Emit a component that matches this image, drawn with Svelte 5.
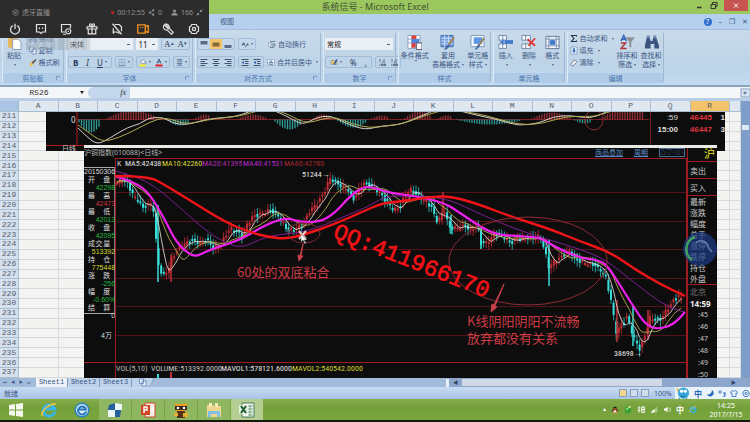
<script lang="ts">
  type Point = [number, number];

  const icons: Record<string, string> = {
    power: '<path d="M5 3.5a6 6 0 1 0 6 0M8 1v7" fill="none" stroke="currentColor" stroke-width="1.7"/>',
    chat: '<path d="M2 2h12v10h-4l-2 2-2-2H2z" fill="none" stroke="currentColor" stroke-width="1.6"/><path d="M5 7h1.6M9.4 7H11" stroke="currentColor" stroke-width="1.8"/>',
    screen: '<path d="M7 12H2V2h12v5M4 15h4" fill="none" stroke="currentColor" stroke-width="1.6"/><circle cx="11" cy="11" r="3.4" fill="none" stroke="currentColor" stroke-width="1.5"/><circle cx="11" cy="11" r="1"/>',
    gift: '<path d="M1.5 5h13v3h-13zM3 8h10v6.500H3zM8 5v9M8 5C4 5 4 1 6 1s2 4 2 4 0-4 2-4 2 4-2 4" fill="none" stroke="currentColor" stroke-width="1.6"/>',
    mute: '<path d="M2 1l12 14M5 2h6l3 3v6M11 14l-3-2H4l-1 2V7" fill="none" stroke="currentColor" stroke-width="1.6"/>',
    camera: '<path d="M1 2.500h10v11H1zM11 5.500l3-2h1v9h-1l-3-2" fill="none" stroke="currentColor" stroke-width="1.8"/><path d="M4 6h1.500M7 6h1.500" stroke="currentColor" stroke-width="1.500"/>',
    wrench: '<path d="M8 7.500l-5-5a4.300 4.300 0 0 0 4 7l5.500 5.500 2.500-2.500-5.500-5.500a4.300 4.300 0 0 0-5-5.500l3.500 3.500z" fill="none" stroke="currentColor" stroke-width="1.500"/>',
    gear: '<path d="M5 2h6l1 2 2 1v6l-2 1-1 2H5l-1-2-2-1V5l2-1z" fill="none" stroke="currentColor" stroke-width="1.6"/><circle cx="8" cy="8" r="2.200" fill="none" stroke="currentColor" stroke-width="1.6"/>',
    share: '<path d="M4 8l8-5M4 8l8 5" stroke="currentColor" stroke-width="1.4"/><circle cx="4" cy="8" r="2.500"/><circle cx="12" cy="3" r="2.500"/><circle cx="12" cy="13" r="2.500"/>',
    person: '<circle cx="8" cy="4.500" r="3.500"/><path d="M1 15v-3l4-3h6l4 3v3z"/>',
    shrink: '<path d="M15 1l-5 5M10 2v4h4M1 15l5-5M2 10h4v4" fill="none" stroke="currentColor" stroke-width="2"/>',
    logo: '<circle cx="8" cy="8" r="6.500" fill="none" stroke="currentColor" stroke-width="1.500"/><path d="M4 5l3 1v5M12 5L9 6v5M5 9h6" fill="none" stroke="currentColor" stroke-width="1.300"/>',
    paste: '<path d="M1 2h10v12H1z" fill="#e8b860"/><path d="M4 1h4v3H4z" fill="#8a8a94"/><path d="M6 5h6l3 3v8H6z" fill="#fff" stroke="#8a9bb8"/>',
    cut: '<path d="M4 1l6 9M12 1L6 10" stroke="#556a90" stroke-width="1.500"/><circle cx="4" cy="12" r="2.500" fill="none" stroke="#3a68b8" stroke-width="1.500"/><circle cx="12" cy="12" r="2.500" fill="none" stroke="#3a68b8" stroke-width="1.500"/>',
    copy: '<path d="M1 1h8v9H1zM6 5h8v10H6z" fill="#eef4fc" stroke="#4a6ca8" stroke-width="1.300"/>',
    brush: '<path d="M1 14l3-7 5 4-5 4z" fill="#ecc440"/><path d="M5 8l8-7 2 2-7 8z" fill="#6a5840"/>',
    top: '<path d="M1 1h14v7H1z" fill="#5b6b86"/>',
    middle: '<path d="M1 4h14v8H1z" fill="#8a6a38"/>',
    bottom: '<path d="M1 9h14v6H1z" fill="#5b6b86"/>',
    orient: '<path d="M2 10l3-6 3 6M3 8h4M8 14l6-7M14 7l-3 0M14 7v3" fill="none" stroke="#344a70" stroke-width="1.600"/>',
    left: '<path d="M1 2h14M1 6h9M1 10h14M1 14h9" stroke="#44546e" stroke-width="2"/>',
    center: '<path d="M1 2h14M4 6h8M1 10h14M4 14h8" stroke="#44546e" stroke-width="2"/>',
    right: '<path d="M1 2h14M6 6h9M1 10h14M6 14h9" stroke="#44546e" stroke-width="2"/>',
    outdent: '<path d="M1 2h14M8 6h7M8 10h7M1 14h14" stroke="#44546e" stroke-width="2"/><path d="M6 5v6L1 8z" fill="#3060b0"/>',
    wrap: '<path d="M4 2h11M4 7h10v4H8M4 14h8" fill="none" stroke="#5a6c88" stroke-width="1.600"/><path d="M1 4h5v8H1z" fill="#d8e4f4" stroke="#8492ac"/>',
    merge: '<path d="M1 2h14v12H1z" fill="#eaf1fa" stroke="#7688a8"/><path d="M3 8h4M13 8H9M8 4l-3 8h6z" stroke="#3a5a98" stroke-width="1.300" fill="none"/>',
    border: '<path d="M2 2h12v12H2zM8 2v12M2 8h12" fill="none" stroke="#8aa0c4" stroke-width="1.300"/><path d="M1 14.500h14" stroke="#456"/>',
    fill: '<path d="M3 7l5-5 5 5-5 4z" fill="#f6f6f6" stroke="#44546e"/><path d="M13 7l2 3-2 1z" fill="#3060b0"/><path d="M1 12h13v4H1z" fill="#f4ec20"/>',
    color: '<path d="M4 10l4-9 4 9M5.500 7h5" fill="none" stroke="#34507e" stroke-width="1.800"/><path d="M1 12h14v4H1z" fill="#e02020"/>',
    money: '<path d="M2 4h12v8H2z" fill="#e6c85c" stroke="#6a84b0"/><path d="M8 12l6-10" stroke="#3858a0" stroke-width="3"/>',
    decimal: '<path d="M2 3h4M10 3h4M3 7h2M8 7h6M2 13h3M7 11h3v3H7zM12 11h3v3h-3z" stroke="#44546e" stroke-width="1.600" fill="none"/>',
    cond: '<path d="M1 1h13v14H1z" fill="#fff" stroke="#8aa0c4"/><path d="M1 5h13M1 9h13M5 1v14M9 1v14" stroke="#8aa0c4"/><path d="M5 1h5v4H5zM5 9h4v5H5z" fill="#e04040"/><path d="M5 5h8v4H5z" fill="#4a84d8"/><path d="M10 9h6v7h-6z" fill="#f8f8f8" stroke="#556"/>',
    table: '<path d="M1 1h13v12H1z" fill="#6a9be0" stroke="#4468a8"/><path d="M1 4h13M1 7h13M1 10h13M5 1v12M9 1v12" stroke="#cfe0f6"/><path d="M15 3l-6 8" stroke="#a08050" stroke-width="2"/><path d="M9 10l2 2-4 4H4z" fill="#476ca8"/>',
    cell: '<path d="M1 1h14v12H1z" fill="#f2f6fc" stroke="#7f96bc"/><path d="M4 3h9v7H4z" fill="#5f96e4"/><path d="M15 4l-6 8" stroke="#a08050" stroke-width="2"/><path d="M9 10l2 2-4 4H5z" fill="#476ca8"/>',
    insert: '<path d="M1 1h8v5H1zM1 10h8v5H1zM5 1v5M5 10v5" fill="#f4f8fc" stroke="#7488a8"/><path d="M7 6h9v4H7z" fill="#3f79cc"/><path d="M6 5v6L2 8z" fill="#3f79cc"/>',
    remove: '<path d="M1 1h9v5H1zM1 10h9v5H1zM5 1v5M5 10v5" fill="#f4f8fc" stroke="#7488a8"/><path d="M7 5l8 7M15 4l-7 8" stroke="#e43838" stroke-width="2"/>',
    format: '<path d="M1 2h14v13H1z" fill="#f4f8fc" stroke="#5e7498"/><path d="M1 5h14M1 12h14M4 2v13M12 2v13" stroke="#7f92b0"/><path d="M5 6h6v5H5z" fill="#3f79cc"/>',
    sum: '<path d="M13 4V2H3l5 6-5 6h10v-2" fill="none" stroke="#1c2e50" stroke-width="2.200"/>',
    down: '<path d="M2 1h12v14H2z" fill="#eef4fc" stroke="#4a6ca8"/><path d="M8 3v6" stroke="#2d65c0" stroke-width="3"/><path d="M4 8h8l-4 5z" fill="#2d65c0"/>',
    erase: '<path d="M1 12l8-9 5 3-8 9z" fill="#f6f6f6" stroke="#50607c" stroke-width="1.400"/>',
    sort: '<path d="M1 7l3-6 3 6M2 5h4" fill="none" stroke="#2f62b8" stroke-width="1.500"/><path d="M1 9h5l-5 6h6" fill="none" stroke="#b03838" stroke-width="1.600"/><path d="M6 3h10l-4 5v6l-2-1V8z" fill="#8e8f96"/>',
    find: '<path d="M3 3h3l1 4h2l1-4h3l3 9v3h-5v-5H7v5H1v-3z" fill="#3c557e"/><path d="M3 1h3v3H3zM10 1h3v3h-3z" fill="#6f88b0"/>',
    windows: '<path d="M1 3l6-1v5.500H1zM8 2l7-1v6.500H8zM1 8.500h6V14l-6-1zM8 8.500h7V15l-7-1z" fill="#f4f8ec"/>',
    ie: '<path d="M14 10a6 5.500 0 1 1 0-3H4" fill="none" stroke="#39b4e8" stroke-width="2.800"/><path d="M1 14C0 9 8 1 15 2" fill="none" stroke="#ecc840" stroke-width="1.500"/>',
    browser: '<circle cx="8" cy="8" r="7.500" fill="#2b83c4"/><circle cx="8" cy="8" r="6" fill="#d8ecf6"/><path d="M12 9.500a4 4 0 1 1 0-2H5" fill="none" stroke="#2477b8" stroke-width="2"/>',
    flag: '<path d="M2 3l6-2v7H1zM8 8h6l-1 7H8z" fill="#215f9e"/><path d="M8 1l7 1v6H8zM1 8h7v7H1z" fill="#eef5f8"/>',
    ppt: '<path d="M5 1h10v14H5z" fill="#f8ece6" stroke="#c84830"/><path d="M1 3h9v10H1z" fill="#cf4527"/><path d="M4 11V5h3v3H4M11 6h3M11 9h3" fill="none" stroke="#fff" stroke-width="1.400"/>',
    bear: '<path d="M2 1l3 1h6l3-1v8H2z" fill="#e89c20"/><path d="M2 4h12v4H2z" fill="#38261c"/><circle cx="5" cy="6" r="1.300" fill="#fff"/><circle cx="11" cy="6" r="1.300" fill="#fff"/><path d="M4 9h8v7H4z" fill="#54301c"/><path d="M1 11h4v3H1zM10 11h5v4h-5z" fill="#e8b030"/>',
    folder: '<path d="M1 3h6l1 1h7v11H1z" fill="#eed78c"/><path d="M3 1h3v4H3zM9 1h3v4H9z" fill="#f6eab8"/><path d="M2 9h12v6h-3v-3H5v3H2z" fill="#7fc0e4"/>',
    excel: '<path d="M3 1h12v14H3z" fill="#f5f8f2" stroke="#4c7c58"/><path d="M9 4h5M9 7h5M9 10h5M9 13h5M11 3v11" stroke="#71a27c"/><path d="M0 3h9v9H0z" fill="#e4efe0"/><path d="M2 4l5 7M7 4l-5 7" stroke="#1c5c35" stroke-width="2"/>',
    penguin: '<path d="M4 7a4 5 0 0 1 8 0l3 5-3-1v3H4v-3l-3 1z" fill="#1c1c1c"/><path d="M5 9h6v5H5z" fill="#fff"/><path d="M3 8h10v2H3z" fill="#e42c20"/><path d="M5 6h6v1.500H5zM3 14h4v2H3zM9 14h4v2H9z" fill="#eda028"/>',
    ball: '<circle cx="8" cy="9" r="6.500" fill="#36a336"/><path d="M8 5c1-4 4-4 6-4 0 3-2 5-6 4z" fill="#d6ee8c"/><circle cx="6" cy="7" r="2" fill="#a6e48c"/>',
    usb: '<path d="M4 1v14M1 5h6M1 10h6M9 3h6v11H9zM9 8h6M12 1v13" fill="none" stroke="#fff" stroke-width="1.500"/>',
    signal: '<path d="M1 14L15 2v12z" fill="#a9c57e"/><path d="M1 14l8-7v7z" fill="#fff"/>',
    speaker: '<path d="M2 6h3l4-4v12L5 10H2z" fill="#fff"/><path d="M11 5c2 2 2 4 0 6M13 3c3 3 3 7 0 10" fill="none" stroke="#fff"/>',
    mascot: '<path d="M1 2l3 7 3-3z" fill="#d8b830"/><circle cx="9" cy="8" r="6" fill="#38a6d8"/><circle cx="7" cy="6" r="1.800" fill="#fff"/><circle cx="11" cy="6" r="1.800" fill="#fff"/><path d="M6 11q3 2 5 0M5 13l-2 3M12 13l2 3" fill="none" stroke="#155f92"/>',
    moon: '<path d="M12 1a7 7 0 1 1-10 9c6 1 10-3 10-9z" fill="#2468b8"/>',
    comma: '<circle cx="4" cy="5" r="2.500" fill="none" stroke="#2468b8" stroke-width="1.600"/><path d="M10 7h4v4l-3 4" fill="none" stroke="#2468b8" stroke-width="2.400"/>',
    shirt: '<path d="M5 2l3 2 3-2 4 3-2 4-1-1v6H4V8L3 9 1 5z" fill="none" stroke="#2468b8" stroke-width="1.600"/>',
  };

  const liveTools = ['power', 'chat', 'screen', 'gift', 'mute', 'camera', 'wrench', 'gear'];
  const columns = 'ABCDEFGHIJKLMNOPQR'.split('');
  const rows = Array.from({ length: 27 }, (_, i) => 211 + i);

  const quotes = [
    ['开盘', '42298', 'green'],
    ['最高', '42473', 'red'],
    ['最低', '42013', 'green'],
    ['收盘', '42095', 'green'],
    ['成交量', '513392', 'yellow'],
    ['持仓', '775448', 'yellow'],
    ['涨跌', '-256', 'green'],
    ['幅度', '-0.60%', 'green'],
    ['结算', '0', 'white'],
  ];
  const sideLabels = ['最新', '涨跌', '幅度', '总手', '涨停', '跌停', '持仓', '外盘'];
  const seconds = [':45', ':46', ':47', ':48', ':49', ':50'];

  const bigStyles = [
    ['cond', '条件格式', ''],
    ['table', '套用', '表格格式'],
    ['cell', '单元格', '样式'],
  ];
  const cellTools = [
    ['insert', '插入'],
    ['remove', '删除'],
    ['format', '格式'],
  ];
  const editTools = [
    ['sum', '自动求和'],
    ['down', '填充'],
    ['erase', '清除'],
  ];
  const apps = ['windows', 'ie', 'browser', 'flag', 'ppt', 'bear', 'folder', 'excel'];
  const tray = ['penguin', 'ball', 'usb', 'signal', 'speaker'];

  // price track, x along the time axis and y down the pane
  const track: Point[] = [
    [115, 184], [122, 179], [128, 184], [133, 195], [138, 200], [143, 208], [147, 205], [151, 203], [154, 212],
    [157, 255], [160, 272], [164, 274], [168, 270], [172, 258], [176, 252], [182, 245], [192, 240], [200, 243],
    [206, 240], [213, 247], [220, 246], [226, 235], [230, 228], [236, 230], [242, 238], [247, 225], [252, 217],
    [258, 215], [265, 212], [270, 210], [278, 215], [284, 224], [288, 232], [295, 228], [303, 225], [310, 210],
    [318, 203], [325, 190], [330, 178], [335, 182], [342, 187], [347, 188], [353, 200], [358, 192], [363, 182],
    [370, 186], [378, 190], [385, 200], [394, 210], [400, 207], [405, 195], [410, 189], [418, 196], [425, 200],
    [432, 208], [436, 221], [440, 218], [444, 208], [449, 228], [455, 228], [465, 226], [470, 230], [477, 225],
    [481, 243], [486, 243], [495, 234], [505, 237], [511, 243], [518, 238], [530, 238], [540, 236], [545, 252],
    [549, 268], [553, 262], [560, 258], [570, 250], [575, 260], [583, 262], [597, 266], [605, 275], [611, 300],
    [616, 332], [621, 325], [627, 317], [633, 335], [640, 350], [645, 335], [650, 318], [660, 320], [668, 308],
    [678, 295], [684, 302],
  ];

  function priceAt(x: number) {
    const i = Math.max(1, track.findIndex((p) => p[0] >= x));
    const [x0, y0] = track[i - 1];
    const [x1, y1] = track[i];
    return y0 + ((y1 - y0) * (x - x0)) / (x1 - x0);
  }

  const candles = Array.from({ length: 218 }, (_, i) => {
    const x = 117 + i * 2.6;
    const open = priceAt(x - 2) + Math.sin(i * 7.3) * 2;
    const close = priceAt(x) + Math.sin(i * 4.1) * 2;
    return {
      x,
      close,
      fall: close > open,
      top: Math.min(open, close),
      size: Math.max(2, Math.abs(close - open)),
      high: Math.min(open, close) - 2 - Math.abs(Math.sin(i * 3.7)) * 4,
      low: Math.max(open, close) + 2 + Math.abs(Math.sin(i * 5.9)) * 4,
    };
  });

  // long shadows that the track leaves out
  const shadows = [
    [158, 205, 282, 1], [171, 255, 282, 0], [443, 192, 212, 0], [549, 240, 286, 1],
    [481, 228, 249, 1], [451, 215, 234, 1], [617, 300, 342, 0], [633, 305, 346, 1], [648, 310, 340, 0],
  ];

  function average(n: number) {
    return candles
      .map((c, i) => {
        const part = candles.slice(Math.max(0, i - n + 1), i + 1);
        return `${c.x.toFixed(1)},${(part.reduce((s, p) => s + p.close, 0) / part.length).toFixed(1)}`;
      })
      .join(' ');
  }

  function curve(points: Point[]) {
    let d = `M${points[0]}`;
    for (let i = 1; i < points.length - 1; i++) {
      const [x, y] = points[i];
      const [nx, ny] = points[i + 1];
      d += `Q${x},${y} ${(x + nx) / 2},${(y + ny) / 2}`;
    }
    return d + `L${points[points.length - 1]}`;
  }

  const ma20 = curve([
    [115, 171], [135, 176], [155, 186], [178, 206], [205, 230], [225, 243], [242, 248], [260, 239], [280, 234],
    [300, 233], [325, 225], [345, 216], [370, 206], [385, 196], [410, 196], [445, 198], [470, 209], [500, 223],
    [530, 234], [560, 243], [600, 256], [625, 275], [650, 295], [668, 307], [684, 312],
  ]);
  const ma40 = curve([
    [115, 176], [135, 182], [150, 194], [165, 220], [175, 240], [185, 251], [195, 257], [205, 252], [218, 247],
    [240, 240], [260, 228], [275, 221], [288, 218], [300, 222], [320, 222], [335, 213], [350, 196], [363, 187],
    [372, 187], [390, 193], [415, 196], [445, 203], [460, 213], [490, 233], [510, 236], [540, 237], [555, 247],
    [580, 258], [598, 260], [607, 265], [620, 285], [640, 317], [648, 326], [657, 329], [670, 326], [678, 320],
    [685, 312],
  ]);
  const ma60 = curve([
    [115, 176], [148, 176], [165, 185], [191, 201], [225, 222], [249, 232], [268, 237], [287, 239], [306, 234],
    [335, 224], [364, 211], [383, 203], [397, 202], [430, 197], [450, 196], [478, 204], [512, 217], [550, 229],
    [579, 241], [610, 252], [636, 270], [660, 284], [685, 296],
  ]);

  const macdFast = curve([
    [78, 128], [85, 135], [97, 145], [110, 138], [128, 127], [140, 124], [148, 118], [163, 117], [172, 123],
    [186, 125], [200, 121], [215, 118], [235, 117], [248, 112], [262, 108], [276, 111], [290, 118], [303, 125],
    [315, 118], [330, 115], [345, 123], [365, 130], [380, 126], [398, 125], [412, 120], [430, 112], [445, 107],
    [460, 111], [480, 116], [500, 120], [518, 126], [540, 123], [552, 117], [570, 115], [590, 119], [606, 112],
  ]);
  const macdSlow = curve([
    [78, 125], [88, 132], [102, 142], [118, 138], [135, 130], [150, 122], [165, 117], [178, 122], [190, 124],
    [206, 120], [222, 118], [240, 116], [254, 112], [266, 109], [284, 112], [298, 120], [309, 123], [322, 119],
    [336, 117], [352, 124], [370, 128], [386, 126], [402, 124], [418, 118], [436, 112], [450, 109], [468, 112],
    [488, 116], [508, 122], [526, 125], [544, 123], [560, 118], [576, 116], [594, 117], [612, 111],
  ]);

  const waves = [
    [79, 102, 13], [106, 160, -9], [168, 192, 6], [196, 213, -5], [238, 268, -5], [275, 304, 10], [314, 332, -5],
    [338, 368, 8], [372, 391, -4], [405, 434, -8], [438, 455, -4], [457, 524, 5], [532, 572, -7], [575, 594, 4],
    [600, 662, -12],
  ];
  const bars = waves.flatMap(([from, to, peak]) =>
    Array.from({ length: Math.floor((to - from) / 2.5) }, (_, i) => {
      const x = from + i * 2.5;
      return { x, h: peak * Math.sin((Math.PI * (x - from + 2)) / (to - from + 4)) };
    }).filter((b) => b.x < 645),
  );
</script>

{#snippet icon(name: string, size = '')}
  <svg class="icon {size}" viewBox="0 0 16 16" fill="currentColor" aria-hidden="true">{@html icons[name]}</svg>
{/snippet}

<div class="app">
  <header class="title-bar">
    <h1>系统信号 - Microsoft Excel</h1>
    <div class="window-buttons">
      <button aria-label="最小化">
        <svg class="icon" viewBox="0 0 16 16"><path d="M2 12h9" stroke="#333" stroke-width="3" /></svg>
      </button>
      <button aria-label="还原">
        <svg class="icon" viewBox="0 0 16 16"><path d="M2 6h9v8H2zM5 6V2h9v8h-3" fill="none" stroke="#333" stroke-width="2" /></svg>
      </button>
      <button class="close" aria-label="关闭">
        <svg class="icon" viewBox="0 0 16 16"><path d="M4 4l8 8M12 4l-8 8" stroke="#fff" stroke-width="2" /></svg>
      </button>
    </div>
  </header>

  <nav class="menu">
    <button>视图</button>
    <div class="doc-buttons">
      <button class="help" aria-label="帮助">?</button>
      <button aria-label="最小化窗口">–</button>
      <button aria-label="还原窗口">❐</button>
      <button aria-label="关闭窗口">✕</button>
    </div>
  </nav>

  <section class="ribbon">
    <div class="group">
      <div class="body">
        <button class="big">{@render icon('paste', 'large')}<span>粘贴</span><i></i></button>
        <div class="stack">
          <button>{@render icon('cut')}剪切</button>
          <button>{@render icon('copy')}复制</button>
          <button>{@render icon('brush')}格式刷</button>
        </div>
      </div>
      <footer>剪贴板<b></b></footer>
    </div>
    <div class="group">
      <div class="body lines">
        <div class="line">
          <select class="wide" aria-label="字体"><option>宋体</option></select>
          <select class="narrow" aria-label="字号"><option>11</option></select>
          <span class="tools font-size"><button>A<sup>▴</sup></button><button>A<sup>▾</sup></button></span>
        </div>
        <div class="line spread">
          <span class="tools letters">
            <button><strong>B</strong></button><button><em>I</em></button><button><u>U</u><i></i></button>
          </span>
          <span class="tools"><button aria-label="边框">{@render icon('border')}<i></i></button></span>
          <span class="tools">
            <button aria-label="填充颜色">{@render icon('fill')}<i></i></button>
            <button aria-label="字体颜色">{@render icon('color')}<i></i></button>
          </span>
          <span class="tools"><button>变<i></i></button></span>
        </div>
      </div>
      <footer>字体<b></b></footer>
    </div>
    <div class="group">
      <div class="body lines">
        <div class="line">
          <span class="tools">
            <button aria-label="顶端对齐">{@render icon('top')}</button>
            <button class="on" aria-label="垂直居中">{@render icon('middle')}</button>
            <button aria-label="底端对齐">{@render icon('bottom')}</button>
          </span>
          <span class="tools"><button aria-label="方向">{@render icon('orient')}<i></i></button></span>
          <button class="end">{@render icon('wrap')}自动换行</button>
        </div>
        <div class="line">
          <span class="tools">
            {#each ['left', 'center', 'right'] as name}
              <button aria-label={name}>{@render icon(name)}</button>
            {/each}
          </span>
          <span class="tools">
            <button aria-label="减少缩进量">{@render icon('outdent')}</button>
            <button aria-label="增加缩进量">{@render icon('outdent')}</button>
          </span>
          <button>{@render icon('merge')}合并后居中<i></i></button>
        </div>
      </div>
      <footer>对齐方式<b></b></footer>
    </div>
    <div class="group">
      <div class="body lines">
        <div class="line">
          <select class="full" aria-label="数字格式"><option>常规</option></select>
        </div>
        <div class="line spread">
          <span class="tools letters">
            <button aria-label="会计数字格式">{@render icon('money')}<i></i></button>
            <button>%</button><button>,</button>
          </span>
          <span class="tools">
            <button aria-label="增加小数位数">{@render icon('decimal')}</button>
            <button aria-label="减少小数位数">{@render icon('decimal')}</button>
          </span>
        </div>
      </div>
      <footer>数字<b></b></footer>
    </div>
    <div class="group">
      <div class="body">
        {#each bigStyles as [name, first, second]}
          <button class="big">
            {@render icon(name, 'large')}<span>{first}</span>
            <span class="second">{second}<i></i></span>
          </button>
        {/each}
      </div>
      <footer>样式</footer>
    </div>
    <div class="group">
      <div class="body">
        {#each cellTools as [name, label]}
          <button class="big">{@render icon(name, 'large')}<span>{label}</span><i></i></button>
        {/each}
      </div>
      <footer>单元格</footer>
    </div>
    <div class="group">
      <div class="body">
        <div class="stack">
          {#each editTools as [name, label]}
            <button>{@render icon(name)}{label}<i></i></button>
          {/each}
        </div>
        <button class="big">{@render icon('sort', 'large')}<span>排序和</span><span class="second">筛选<i></i></span></button>
        <button class="big">{@render icon('find', 'large')}<span>查找和</span><span class="second">选择<i></i></span></button>
      </div>
      <footer>编辑</footer>
    </div>
  </section>

  <div class="formula-bar">
    <input class="name-box" aria-label="名称框" value="R526" />
    <i></i>
    <button class="fx"><em>fx</em></button>
    <input class="formula" aria-label="编辑栏" value="" />
    <button class="expand" aria-label="展开编辑栏">»</button>
  </div>

  <main class="sheet">
    <table>
      <thead>
        <tr>
          <th class="corner"></th>
          {#each columns as name}
            <th class:current={name === 'R'}>{name}</th>
          {/each}
          <th class="rest"></th>
        </tr>
      </thead>
      <tbody>
        {#each rows as n}
          <tr>
            <th>{n}</th>
            {#each columns as name (name)}
              <td></td>
            {/each}
            <td></td>
          </tr>
        {/each}
      </tbody>
    </table>
    <div class="v-scroll"><span></span></div>

    <div class="picture macd">
      <svg viewBox="46 112 604 39" preserveAspectRatio="xMinYMin slice">
        <path d="M77 119.500H649" stroke="#7c2026" />
        {#each bars as bar}
          <path d="M{bar.x} 119.500v{bar.h}" stroke={bar.h > 0 ? '#2f9c98' : '#98323a'} stroke-width="1.300" />
        {/each}
        <path d="M77 112V145M46 145.500H84" stroke="#b01c20" />
        <path d={macdFast} fill="none" stroke="#d4d0c8" />
        <path d={macdSlow} fill="none" stroke="#b0aa50" />
        <ellipse cx="594" cy="120" rx="9" ry="10" fill="none" stroke="#8c2c30" />
        <text x="71" y="123" font-size="8" fill="#ddd">0</text>
        <text x="62" y="151" font-size="7" fill="#ccc">日线</text>
      </svg>
      <div class="ticks">
        <span>:59</span><b>46445</b><strong>1</strong>
        <strong>15:00</strong><b>46447</b><strong>3</strong>
      </div>
    </div>

    <div class="picture kline">
      <div class="chart">
        <div class="chart-head">
          <span>沪铜指数(010088)&lt;日线&gt;</span>
          <a href="#overlay">商品叠加</a>
          <a href="#period">周期</a>
          <a class="boxed" href="#zoom">△▽◁▷</a>
        </div>
        <div class="chart-body">
          <div class="side-left">
            <dl>
              <dt class="date">20150306</dt>
              {#each quotes as [label, value, tone]}
                <dt>{#each label as char}<span>{char}</span>{/each}</dt>
                <dd class={tone}>{value}</dd>
              {/each}
            </dl>
            <p>4万</p>
            <div class="left-foot"></div>
          </div>
          <svg class="plot" viewBox="115 158 572 220" preserveAspectRatio="xMinYMin slice">
            {#each [192.5, 221.5, 249.5, 278.5, 306.5, 335.5] as y}
              <path d="M115 {y}H687" stroke="#541419" />
            {/each}
            <path d="M115 158.500H687M115 362.500H687" stroke="#a01c22" />
            <path d="M115.500 158V378M686.500 158V378" stroke="#a01c22" />

            {#each candles as c}
              <path d="M{c.x} {c.high}V{c.low}" stroke={c.fall ? '#30c8c4' : '#c03038'} stroke-width="0.8" />
              <path d="M{c.x} {c.top}v{c.size}" stroke={c.fall ? '#38e0dc' : '#c42c34'} stroke-width="2" />
            {/each}
            {#each shadows as [x, from, to, fall]}
              <path d="M{x} {from}V{to}" stroke={fall ? '#38dcd8' : '#c03038'} stroke-width="1.500" />
            {/each}
            <path d="M158 374v4" stroke="#38dcd8" stroke-width="2" />
            <path d="M171 372v6" stroke="#c03038" stroke-width="2" />

            <polyline points={average(5)} fill="none" stroke="#d8d4cc" stroke-width="0.9" />
            <polyline points={average(11)} fill="none" stroke="#b8ac50" stroke-width="0.9" />
            <path d={ma20} fill="none" stroke="#7c1f90" />
            <path d={ma40} fill="none" stroke="#f020ee" stroke-width="2.200" />
            <path d={ma60} fill="none" stroke="#f41418" stroke-width="2.400" />

            <ellipse cx="304" cy="233" rx="16" ry="10" fill="none" stroke="#7c2830" />
            <ellipse cx="528" cy="261" rx="79" ry="44" fill="none" stroke="#8c2c34" />
            <g fill="#c8404a" stroke="#c8404a">
              <path d="M303 244l-3 12-2-1 1 6 4-5-2 0z" />
              <path d="M504 284l-10 21-2-1-1 8 6-5-2-1z" />
            </g>
            <path d="M299 231l7 8M306 231l-7 8" stroke="#e8c8c4" stroke-width="2" />
            <path d="M301 234v8l2-2 2 4 1-1-2-3h3z" fill="#fff" stroke="#555" stroke-width="0.5" />

            <g class="legend">
              <text x="117" y="166" fill="#d8d8d8">K</text>
              <text x="125" y="166" fill="#e4e4e4">MA5:42438</text>
              <text x="162" y="166" fill="#dada30">MA10:42260</text>
              <text x="202" y="166" fill="#b428b4">MA20:41395</text>
              <text x="243" y="166" fill="#b428c8">MA40:41531</text>
              <text x="284" y="166" fill="#a4282c">MA60:42780</text>
              <text x="302" y="177" fill="#e8e8e8">51244→</text>
              <text x="614" y="356" fill="#e8e8e8">38698→</text>
              <text x="116" y="371" fill="#b8b8b8">VOL(5,10)</text>
              <text x="151" y="371" fill="#c4c4c4">VOLUME:513392.0000</text>
              <text x="221" y="371" fill="#e4e4e4">MAVOL1:578121.6000</text>
              <text x="292" y="371" fill="#d4d430">MAVOL2:540542.0000</text>
            </g>
            <g class="note">
              <text x="237" y="277">60处的双底粘合</text>
              <text x="467" y="326">K线阴阳阴阳不流畅</text>
              <text x="467" y="343">放弃都没有关系</text>
            </g>
            <text class="contact" transform="translate(332 237) rotate(21.500)">QQ:411966170</text>
          </svg>
        </div>
      </div>
      <aside>
        <h2>沪</h2>
        <p class="deal">卖出</p>
        <p class="deal">买入</p>
        <ul>
          {#each sideLabels as label}
            <li>{label}</li>
          {/each}
        </ul>
        <p class="city">北京</p>
        <p class="time">14:59</p>
        <ol>
          {#each seconds as s}
            <li>{s}</li>
          {/each}
        </ol>
        <svg class="gauge" viewBox="0 0 36 36" aria-hidden="true">
          <circle cx="18" cy="18" r="17" fill="#1c3c88" fill-opacity="0.7" />
          <path d="M10 29A13 13 0 0 1 13 6" fill="none" stroke="#3fa060" stroke-width="2.500" />
          <path d="M14 12a7 7 0 0 1 12 4M26 16l4 5" fill="none" stroke="#86a4d8" stroke-opacity="0.6" stroke-width="2" />
        </svg>
      </aside>
    </div>
  </main>

  <div class="sheet-tabs">
    <div class="arrows"><button aria-label="第一张">⏮</button><button aria-label="上一张">◀</button><button aria-label="下一张">▶</button><button aria-label="最后一张">⏭</button></div>
    <button class="tab active">Sheet1</button>
    <button class="tab">Sheet2</button>
    <button class="tab">Sheet3</button>
    <button class="tab add" aria-label="插入工作表">{@render icon('copy')}</button>
    <div class="h-scroll"><b></b><small>◀</small><span></span><small>▶</small></div>
  </div>

  <div class="status">
    <span>就绪</span>
    <div class="views"><button aria-label="普通"></button><button aria-label="页面布局"></button><button aria-label="分页预览"></button></div>
    <span class="zoom">100%</span>
    <div class="ime">
      {@render icon('mascot', 'large')}
      <b>中</b>
      {@render icon('moon')}{@render icon('comma')}{@render icon('shirt')}{@render icon('gear')}
    </div>
  </div>

  <footer class="taskbar">
    {#each apps as name, i}
      <button class:running={i > 2} class:front={name === 'excel'} aria-label={name}>{@render icon(name, 'app-icon')}</button>
    {/each}
    <div class="tray">
      <small>▴</small>
      {#each tray as name}
        {@render icon(name)}
      {/each}
      <b>中</b>
      {@render icon('ie')}
    </div>
    <time><span>14:25</span><span>2017/7/15</span></time>
  </footer>

  <div class="watermark"></div>
  <div class="live">
    <div class="live-info">
      {@render icon('logo')}<span class="name">虎牙直播</span>
      <i></i><span class="elapsed">00:12:55</span>
      {@render icon('share')}<span class="shares">0</span>
      {@render icon('person')}<span>166</span>
      {@render icon('shrink')}
    </div>
    <div class="live-tools">
      {#each liveTools as name}
        <button class:active={name === 'camera'} aria-label={name}>{@render icon(name)}</button>
      {/each}
    </div>
  </div>
</div>

<style>
  :global(body) {
    margin: 0;
  }

  .app {
    position: relative;
    display: flex;
    flex-direction: column;
    min-height: 100vh;
    overflow: hidden;
    background: #b8d0ec;
    color: #3d5785;
    font: 7px/9px 'Noto Sans', 'Noto Sans CJK SC', sans-serif;
  }

  .app * {
    box-sizing: border-box;
  }

  button,
  input,
  select {
    margin: 0;
    padding: 0;
    border: 0;
    background: none;
    color: inherit;
    font: inherit;
  }

  button {
    display: flex;
    align-items: center;
    justify-content: center;
    gap: 2px;
    white-space: nowrap;
  }

  h1,
  h2,
  p,
  ul,
  ol,
  dl,
  dd {
    margin: 0;
    padding: 0;
    list-style: none;
    font-weight: 400;
  }

  .icon {
    flex: none;
    display: block;
    width: 8px;
    height: 9px;
  }

  .large {
    width: 15px;
    height: 16px;
  }

  .title-bar {
    display: flex;
    align-items: center;
    justify-content: center;
    height: 14px;
    background: #9cc75f;
    color: #3f5230;
  }

  h1 {
    font-size: 9px;
    line-height: 14px;
  }

  .window-buttons {
    position: absolute;
    top: 0;
    right: 2px;
    display: flex;
    height: 11px;
    gap: 6px;
  }

  .close {
    width: 24px;
    background: #c75450;
  }

  .menu {
    display: flex;
    justify-content: space-between;
    height: 15px;
    padding: 0 2px 0 220px;
    background: #b5d0ee;
  }

  .doc-buttons {
    display: flex;
    align-items: center;
    gap: 7px;
  }

  .help {
    width: 8px;
    height: 8px;
    border-radius: 50%;
    background: #2f6fd0;
    color: #fff;
  }

  .ribbon {
    display: grid;
    grid-template-columns: 62px 127px 126px 73px 93px 72px 97px;
    gap: 2px;
    height: 58px;
    padding: 2px;
    border-top: 1px solid #a5bfdd;
    border-bottom: 2px solid #88a5bd;
    background: linear-gradient(#c9dbea, #bdd3e7 60%, #c3daf0);
  }

  .group {
    display: flex;
    flex-direction: column;
    min-width: 0;
    border-right: 1px solid #9fb8d4;
    border-left: 1px solid #dce9f6;
    border-radius: 2px;
  }

  .group footer {
    position: relative;
    display: flex;
    align-items: center;
    justify-content: center;
    height: 10px;
    background: #b0cbe8;
    color: #4c74a8;
  }

  .group footer b {
    position: absolute;
    right: 3px;
    width: 4px;
    height: 4px;
    border: 1px solid #7f9cc4;
    border-right: 0;
    border-bottom: 0;
  }

  .body {
    flex: 1;
    display: flex;
    justify-content: space-around;
    min-height: 0;
  }

  .big {
    flex-direction: column;
    justify-content: flex-start;
    gap: 0;
    padding-top: 2px;
  }

  .big span {
    margin-top: 1px;
  }

  .big .second {
    display: flex;
    align-items: center;
    margin: 0;
  }

  .big > i {
    margin-top: 4px;
  }

  i {
    width: 0;
    height: 0;
    margin-left: 2px;
    border: 1px solid transparent;
    border-top: 2px solid #50607c;
    border-bottom: 0;
  }

  .stack {
    display: flex;
    flex-direction: column;
    align-items: flex-start;
    gap: 3px;
    padding-top: 2px;
  }

  .stack button {
    height: 9px;
  }

  .lines {
    flex-direction: column;
    justify-content: flex-start;
    gap: 6px;
    padding: 6px 2px 0 1px;
  }

  .line {
    display: flex;
    align-items: center;
    gap: 3px;
    height: 12px;
  }

  .spread {
    justify-content: space-between;
  }

  .tools {
    display: flex;
    align-items: center;
    height: 12px;
    border: 1px solid #a3bbda;
    border-radius: 2px;
  }

  .tools button {
    height: 10px;
    padding: 0 2px;
    gap: 0;
  }

  .tools .on {
    background: #f4c468;
  }

  .letters button {
    padding: 0 4px;
    color: #26385c;
    font-size: 8px;
  }

  .font-size button {
    color: #26385c;
    font: 9px/10px 'Liberation Serif', serif;
  }

  sup {
    font-size: 5px;
  }

  .end {
    margin-left: auto;
    margin-right: 12px;
  }

  select {
    appearance: none;
    height: 12px;
    padding-left: 2px;
    background: linear-gradient(#50607c, #50607c) right 3px center / 3px 1px no-repeat #e9eff5;
    color: #222;
  }

  .wide {
    width: 70px;
  }

  .narrow {
    width: 23px;
    font-size: 8px;
  }

  .full {
    width: 100%;
  }

  .formula-bar {
    display: flex;
    align-items: center;
    height: 11px;
    background: #f5f6f7;
  }

  .name-box {
    width: 78px;
    color: #333;
    font: 8px/10px 'Liberation Mono', monospace;
    text-align: center;
  }

  .formula-bar i {
    border: 2px solid transparent;
    border-top: 3px solid #222;
    border-bottom: 0;
  }

  .fx {
    justify-content: flex-end;
    width: 42px;
    height: 11px;
    margin-left: 4px;
    padding-right: 4px;
    border-radius: 6px 0 0 6px;
    background: #c4d7ec;
    color: #333;
    font: 8px/10px 'Liberation Serif', serif;
  }

  .formula {
    flex: 1;
    min-width: 0;
  }

  .expand {
    width: 9px;
    height: 10px;
    border: 1px solid #8ea6c6;
    background: #d6e4f4;
    color: #223;
    transform: rotate(90deg);
  }

  .sheet {
    position: relative;
    flex: 1;
    display: flex;
    min-height: 280px;
    border-top: 3px solid #b9cee4;
  }

  table {
    flex: 1;
    height: 277px;
    border-collapse: separate;
    border-spacing: 0;
    table-layout: fixed;
    background: #f3f3f2;
  }

  th,
  td {
    padding: 0;
    border-right: 1px solid #d9dde0;
    border-bottom: 1px solid #d5d9dc;
    line-height: 8px;
  }

  th {
    border-color: #a9bdd0;
    background: #d6e1ed;
    color: #55606e;
    font: 8px/8px 'Liberation Mono', monospace;
  }

  thead th {
    height: 11px;
    background: #dfe8f1;
  }

  .corner {
    width: 19px;
    background: #a9c4e4;
  }

  .rest {
    width: 11px;
  }

  thead .current {
    background: #f2c369;
  }

  .v-scroll {
    width: 9px;
    padding: 24px 1px 0;
    background: #7f9dc9;
  }

  .v-scroll span {
    display: block;
    height: 5px;
    background: #dde8f6;
  }

  .picture {
    position: absolute;
    display: flex;
    overflow: hidden;
    background: #0d0d0e;
  }

  .picture svg {
    flex: 1;
    display: block;
    min-width: 0;
  }

  .macd {
    top: 11px;
    right: 25px;
    left: 46px;
    height: 39px;
  }

  .ticks {
    display: grid;
    grid-template-columns: 27px 34px 1fr;
    grid-auto-rows: 12px;
    width: 75px;
    border-left: 1px solid #7c2026;
    color: #ddd;
    font: 8px/12px 'Liberation Sans', sans-serif;
    text-align: right;
  }

  .ticks b {
    color: #e0343c;
  }

  .ticks strong {
    white-space: nowrap;
  }

  .kline {
    top: 44px;
    right: 33px;
    bottom: 0;
    left: 84px;
    border-top: 3px solid #e9e9e6;
  }

  .chart {
    flex: 1;
    display: flex;
    flex-direction: column;
    min-width: 0;
  }

  .chart-head {
    display: flex;
    gap: 11px;
    height: 10px;
    padding-right: 2px;
    color: #b4b4b4;
    line-height: 10px;
  }

  .chart-head span {
    margin-right: auto;
  }

  a {
    color: #5c8cc4;
  }

  .boxed {
    height: 9px;
    border: 1px solid #4a6c98;
    font-size: 6px;
    line-height: 7px;
    text-decoration: none;
  }

  .chart-body {
    flex: 1;
    display: flex;
    min-height: 0;
  }

  .side-left {
    display: flex;
    flex-direction: column;
    width: 31px;
    padding-top: 9px;
    color: #ddd;
    font: 7px/8px 'Liberation Sans', 'Noto Sans CJK SC', sans-serif;
    text-align: right;
  }

  dl {
    display: grid;
    grid-auto-rows: 1fr;
    height: 147px;
    border-top: 1px solid #aaa;
    border-right: 1px solid #777;
    border-bottom: 1px solid #aaa;
  }

  dt {
    display: flex;
    justify-content: space-between;
    padding: 0 5px 0 4px;
  }

  .date {
    padding: 0;
  }

  .red {
    color: #d0343c;
  }

  .green {
    color: #22b83a;
  }

  .yellow {
    color: #d4d42c;
  }

  .side-left p {
    flex: 1;
    padding: 18px 3px 0 0;
  }

  .left-foot {
    height: 16px;
    border-top: 1px solid #a01c22;
  }

  .legend {
    font: 8px 'Liberation Sans Narrow', 'Roboto Condensed', 'Noto Sans', sans-serif;
  }

  .note {
    fill: #cc3c44;
    font: 13px 'Noto Sans CJK SC', sans-serif;
  }

  .contact {
    fill: #f41216;
    stroke: #f41216;
    stroke-width: 0.6px;
    font: 23px 'Liberation Mono', monospace;
  }

  aside {
    position: relative;
    width: 30px;
    border-left: 1px solid #a01c22;
    color: #c8c8c8;
    font-size: 8px;
  }

  h2 {
    height: 13px;
    padding-right: 2px;
    color: #e4e420;
    font-size: 11px;
    line-height: 12px;
    text-align: right;
  }

  .deal {
    height: 17px;
    padding-left: 2px;
    border-top: 1px solid #a01c22;
    line-height: 17px;
  }

  aside ul {
    padding-left: 2px;
    border-top: 1px solid #a01c22;
    border-bottom: 1px solid #a01c22;
    line-height: 11px;
  }

  .city {
    padding-left: 2px;
    color: #777;
    line-height: 13px;
  }

  .time {
    padding-left: 2px;
    color: #eee;
    font-weight: 700;
    line-height: 11px;
  }

  aside ol {
    padding-right: 9px;
    font-size: 7px;
    line-height: 12px;
    text-align: right;
  }

  .picture .gauge {
    position: absolute;
    top: 83px;
    left: -6px;
    width: 36px;
    height: 36px;
  }

  .sheet-tabs {
    display: flex;
    height: 9px;
    background: #a3bbda;
  }

  .arrows {
    display: flex;
    width: 36px;
    gap: 4px;
    padding-left: 3px;
    font-size: 4px;
  }

  .tab {
    width: 32px;
    border-right: 1px solid #7f9cc4;
    background: #bed2ea;
    font: 7px/9px 'Liberation Mono', monospace;
  }

  .active.tab {
    background: #eef3f9;
  }

  .tab.add {
    width: 22px;
    border-radius: 0 0 9px 0;
  }

  .h-scroll {
    display: flex;
    align-items: center;
    gap: 4px;
    width: 304px;
    margin-left: auto;
    background: #8ca6cc;
    color: #2e4266;
    font-size: 5px;
  }

  .h-scroll b {
    width: 3px;
    height: 8px;
    background: #e8f0f8;
  }

  .h-scroll span {
    width: 200px;
    height: 7px;
    background: #cfd8e4;
  }

  .h-scroll small {
    font-size: 5px;
  }

  .h-scroll small:last-child {
    margin-right: 14px;
    margin-left: auto;
  }

  .status {
    display: flex;
    align-items: center;
    height: 12px;
    padding-left: 4px;
    background: linear-gradient(#c8dbf2, #a9c4e6);
  }

  .views {
    display: flex;
    gap: 3px;
    margin-left: auto;
  }

  .views button {
    width: 8px;
    height: 8px;
    border: 1px solid #8a9fc0;
    background: #cfdcec;
  }

  .views button:first-child {
    background: #f2d48c;
  }

  .zoom {
    width: 21px;
    margin-left: 5px;
  }

  .ime {
    display: flex;
    align-items: center;
    gap: 4px;
    height: 12px;
    background: #eaf3fb;
    color: #2468b8;
  }

  .ime b {
    font-size: 8px;
  }

  .taskbar {
    display: flex;
    align-items: stretch;
    gap: 1px;
    height: 23px;
    border-bottom: 2px solid #101a06;
    background: linear-gradient(#86ad4c, #74a03a 40%, #7ba63f);
    color: #fff;
  }

  .taskbar button {
    width: 32px;
  }

  .taskbar .running {
    background: #8fb660;
  }

  .taskbar .front {
    background: #b4cd92;
  }

  .app-icon {
    width: 16px;
    height: 16px;
  }

  .tray {
    display: flex;
    align-items: center;
    gap: 5px;
    margin-right: 4px;
    margin-left: auto;
  }

  .tray b {
    font-size: 8px;
  }

  time {
    display: flex;
    flex-direction: column;
    justify-content: center;
    width: 48px;
    text-align: center;
  }

  .watermark {
    position: absolute;
    top: 38px;
    left: 26px;
    width: 64px;
    height: 12px;
    background: repeating-linear-gradient(90deg, #8793a0 0 5px, #a8b4c0 5px 8px);
    opacity: 0.4;
  }

  .live {
    position: absolute;
    top: 0;
    left: 0;
    width: 209px;
    height: 38px;
    background: #2c2c2c;
    color: #e4e4e4;
  }

  .live-info {
    display: flex;
    align-items: center;
    gap: 3px;
    padding: 8px 6px 0 12px;
    color: #929292;
  }

  .live-info .icon {
    width: 7px;
    height: 7px;
  }

  .live-info .name {
    margin-right: auto;
  }

  .live-info i {
    width: 3px;
    height: 3px;
    border: 0;
    border-radius: 50%;
    background: #d42020;
  }

  .shares {
    margin-right: 6px;
  }

  .live-tools {
    display: flex;
    justify-content: space-between;
    padding: 6px 9px 0;
  }

  .live-tools .icon {
    width: 12px;
    height: 12px;
  }

  .live-tools .active {
    color: #f09420;
  }
</style>
